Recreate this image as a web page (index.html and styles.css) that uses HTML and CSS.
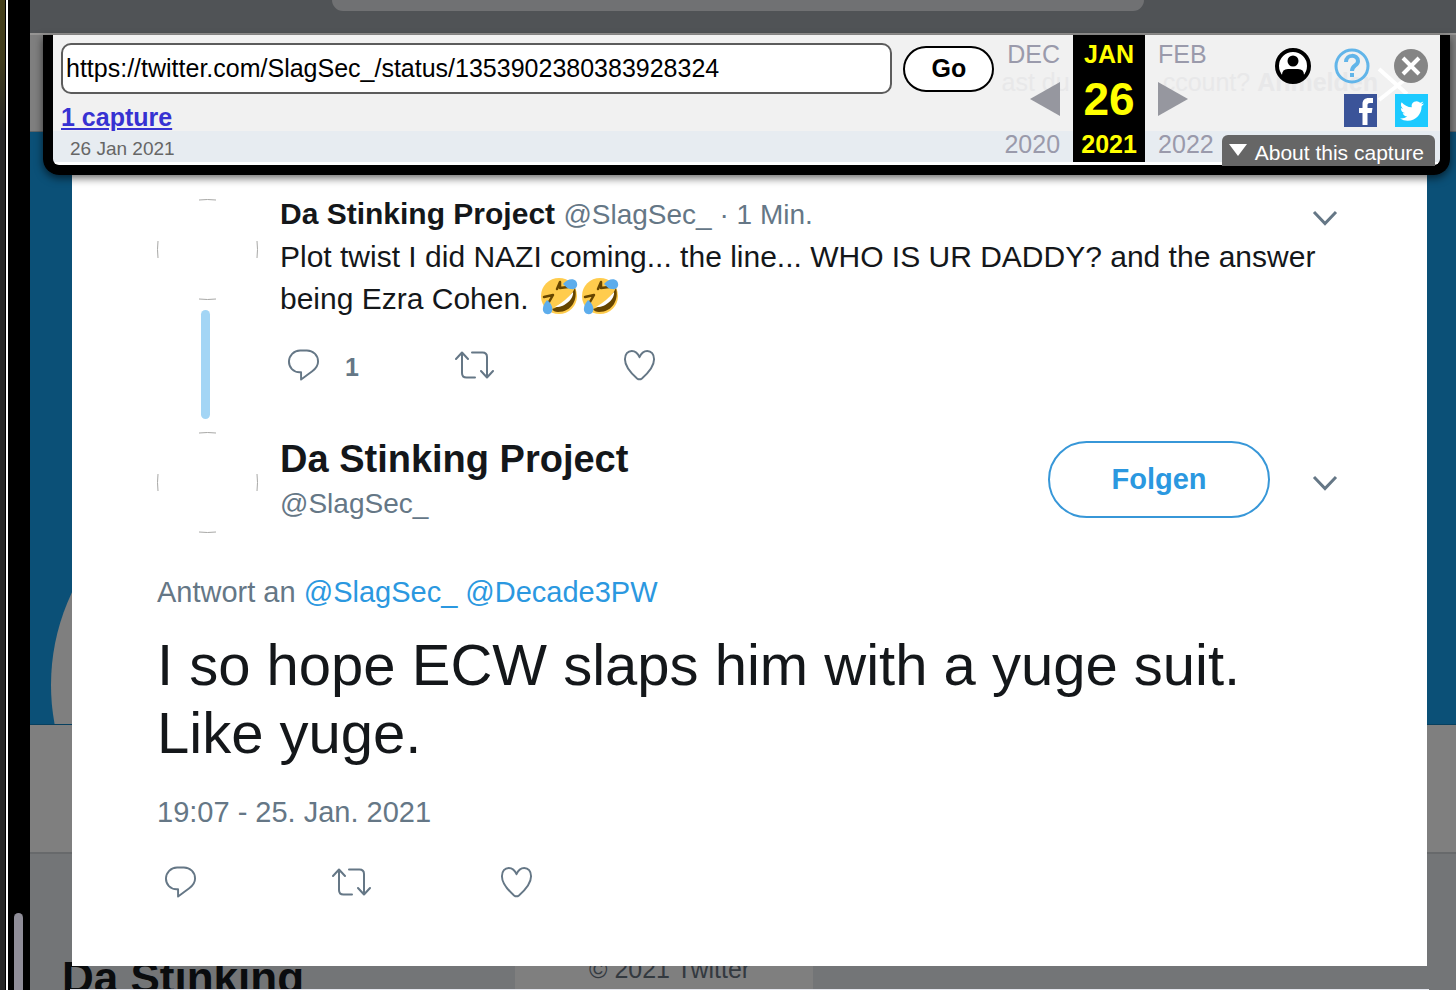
FILE: index.html
```html
<!DOCTYPE html>
<html lang="de">
<head>
    <meta charset="UTF-8">
    <meta name="viewport" content="width=device-width, initial-scale=1.0">
    <title>Da Stinking Project auf Twitter</title>
    <link rel="stylesheet" href="styles.css">
</head>
<body>
    <svg class="defs" aria-hidden="true">
        <symbol id="reply" viewBox="0 0 34 34">
            <path d="M13.500 2h7C27 2 32 7 32 13.500c0 4-2.500 7.500-6 10L14.500 32v-7.500H13C6.500 24.500 2 19.500 2 13.500S7 2 13.500 2z"/>
        </symbol>
        <symbol id="retweet" viewBox="0 0 40 34">
            <path d="M1 11l6-6.500 6 6.500M7 5v20q0 4.500 4.500 4.500H20M17 4.500h10.500Q32 4.500 32 9v20M26 23l6 6.500 6-6.500"/>
        </symbol>
        <symbol id="heart" viewBox="0 0 34 34">
            <path d="M17 9C15 4 12 2.500 9 2.500 5 2.500 2 6 2 11c0 8 7 15 12.500 19.800q2.500 2 5 0C25 26 32 19 32 11c0-5-3-8.500-7-8.500-3 0-6 1.500-8 6.500z"/>
        </symbol>
        <symbol id="down" viewBox="0 0 26 16">
            <path d="M2 2l11 11.500L24 2"/>
        </symbol>
        <symbol id="avatar" viewBox="0 0 101 101">
            <path d="M42 1Q50.500 0 59 1M42 100Q50.500 101 59 100M1 42Q0 50.500 1 59M100 42Q101 50.500 100 59"/>
        </symbol>
        <symbol id="rofl" viewBox="0 0 38 38">
            <circle cx="19" cy="19" r="18" fill="#ffcc4d"/>
            <path d="M35 11c3 11-3 24-17 24-3 0-5-1-6-3 8-2 18-11 23-21z" fill="#664500"/>
            <path d="M33 15c1 7-9 16-18 15 7-4 13-9 18-15z" fill="#fff"/>
            <path d="M4 20l9-2-4 7M17 12l3-7v6l8-1" fill="none" stroke="#664500" stroke-width="2.500" stroke-linecap="round" stroke-linejoin="round"/>
            <path d="M23 7c4-5 10-6 13-3 3 4 0 9-5 8-3 0-5-2-8-5zM7 23c5 4 7 9 4 13-4 3-9 0-8-5 0-3 2-5 4-8z" fill="#5dadec"/>
        </symbol>
    </svg>

    <div class="edge"><span class="scrollbar"></span></div>

    <div class="page">
        <!-- profile page behind the dialog -->
        <div class="backdrop">
            <div class="browser-bar"><span class="browser-tab"></span></div>
            <div class="top-nav"></div>
            <div class="banner"><span class="banner-avatar"></span></div>
            <div class="stats"></div>
            <div class="profile">
                <h2>Da Stinking</h2>
                <div class="copyright">© 2021 Twitter</div>
            </div>
        </div>

        <div class="front">
            <div class="toolbar">
                <div class="ghost" aria-hidden="true"><span>ast du</span><span>ccount? <b>Anmelden</b></span></div>
                <svg class="ghost-x" viewBox="0 0 36 36" aria-hidden="true"><path d="M3 3l28 25M31 12L3 34"/></svg>
                <div class="search">
                    <form class="search-row">
                        <input type="text" aria-label="URL" value="https://twitter.com/SlagSec_/status/1353902380383928324">
                        <button type="button">Go</button>
                    </form>
                    <a class="captures" href="#">1 capture</a>
                    <div class="range">26 Jan 2021</div>
                </div>
                <div class="calendar">
                    <div class="month prev">
                        <span>DEC</span>
                        <svg viewBox="0 0 30 34"><path d="M30 0v34L0 17z"/></svg>
                        <span>2020</span>
                    </div>
                    <div class="month current">
                        <span>JAN</span>
                        <span class="day">26</span>
                        <span>2021</span>
                    </div>
                    <div class="month next">
                        <span>FEB</span>
                        <svg viewBox="0 0 30 34"><path d="M0 0v34l30-17z"/></svg>
                        <span>2022</span>
                    </div>
                </div>
                <div class="tools">
                    <div class="tool-row">
                        <button type="button" aria-label="Account"><svg viewBox="0 0 36 36"><circle cx="18" cy="18" r="16" fill="#fff" stroke="#000" stroke-width="4"/><circle cx="18" cy="13" r="5.500"/><path d="M7 31v-4q0-6 6-6h10q6 0 6 6v4q-11 8-22 0z"/></svg></button>
                        <button type="button" aria-label="Help"><svg viewBox="0 0 36 36"><g fill="none" stroke="#62b5e9"><circle cx="18" cy="18" r="16" stroke-width="3"/><path d="M12 14c0-8 12-8 12-1 0 5-6 4-6 10" stroke-width="4"/><path d="M18 25v4" stroke-width="4"/></g></svg></button>
                        <button type="button" aria-label="Close"><svg viewBox="0 0 36 36"><circle cx="18" cy="18" r="17" fill="#858585"/><path d="M10 10l16 16M26 10L10 26" stroke="#fff" stroke-width="4"/></svg></button>
                    </div>
                    <div class="tool-row share">
                        <a href="#" aria-label="Facebook"><svg viewBox="0 0 33 33"><path d="M0 0h33v33H0z" fill="#3b5499"/><path d="M18.500 31V19H15v-5h3.500v-4c0-4 2.500-6 6-6H29v5h-3c-1.800 0-2.500.700-2.500 2v3h5l-.800 5h-4.200v12z" fill="#fff"/></svg></a>
                        <a href="#" aria-label="Twitter"><svg viewBox="0 0 33 33"><path d="M0 0h33v33H0z" fill="#1dcaff"/><path transform="translate(5 5)" fill="#fff" d="M23.953 4.570a10 10 0 01-2.825.775 4.958 4.958 0 002.163-2.723c-.951.555-2.005.959-3.127 1.184a4.920 4.920 0 00-8.384 4.482C7.690 8.095 4.067 6.130 1.640 3.162a4.822 4.822 0 00-.666 2.475c0 1.710.870 3.213 2.188 4.096a4.904 4.904 0 01-2.228-.616v.060a4.923 4.923 0 003.946 4.827 4.996 4.996 0 01-2.212.085 4.936 4.936 0 004.604 3.417 9.867 9.867 0 01-6.102 2.105c-.390 0-.779-.023-1.170-.067a13.995 13.995 0 007.557 2.209c9.053 0 13.998-7.496 13.998-13.985 0-.210 0-.420-.015-.630A9.935 9.935 0 0024 4.590z"/></svg></a>
                    </div>
                    <button type="button" class="about"><svg viewBox="0 0 18 12"><path d="M0 0h18l-9 12z"/></svg>About this capture</button>
                </div>
            </div>

            <main class="card">
                <article class="tweet">
                    <div class="thread">
                        <svg class="avatar"><use href="#avatar"/></svg>
                        <span class="thread-line"></span>
                    </div>
                    <div class="tweet-body">
                        <div class="tweet-head">
                            <div><b>Da Stinking Project</b> <span class="muted handle">@SlagSec_ · 1 Min.</span></div>
                            <button type="button" class="more" aria-label="Mehr"><svg><use href="#down"/></svg></button>
                        </div>
                        <p>Plot twist I did NAZI coming... the line... WHO IS UR DADDY? and the answer being Ezra Cohen. <svg class="emoji"><use href="#rofl"/></svg><svg class="emoji"><use href="#rofl"/></svg></p>
                        <div class="actions">
                            <button type="button" aria-label="Antworten"><svg><use href="#reply"/></svg><span>1</span></button>
                            <button type="button" aria-label="Retweeten"><svg class="wide"><use href="#retweet"/></svg></button>
                            <button type="button" aria-label="Gefällt mir"><svg><use href="#heart"/></svg></button>
                        </div>
                    </div>
                </article>

                <article class="main-tweet">
                    <header class="author">
                        <svg class="avatar"><use href="#avatar"/></svg>
                        <div class="author-name">
                            <h1>Da Stinking Project</h1>
                            <span class="muted handle">@SlagSec_</span>
                        </div>
                        <button type="button" class="follow">Folgen</button>
                        <button type="button" class="more" aria-label="Mehr"><svg><use href="#down"/></svg></button>
                    </header>
                    <div class="reply-to">Antwort an <a href="#">@SlagSec_</a> <a href="#">@Decade3PW</a></div>
                    <p class="big-text">I so hope ECW slaps him with a yuge suit. Like yuge.</p>
                    <div class="date">19:07 - 25. Jan. 2021</div>
                    <div class="actions">
                        <button type="button" aria-label="Antworten"><svg><use href="#reply"/></svg></button>
                        <button type="button" aria-label="Retweeten"><svg class="wide"><use href="#retweet"/></svg></button>
                        <button type="button" aria-label="Gefällt mir"><svg><use href="#heart"/></svg></button>
                    </div>
                </article>
            </main>
            <div class="next-card"></div>
        </div>
    </div>
</body>
</html>
```
FILE: styles.css
```css
* {
    box-sizing: border-box;
}
body {
    font-family: "Liberation Sans", Arial, Helvetica, sans-serif;
    font-size: 29px;
    color: #14171a;
    margin: 0;
    display: flex;
    height: 100vh;
    overflow: hidden;
    background: #000;
}
button {
    font-family: inherit;
    background: none;
    border: none;
    padding: 0;
    cursor: pointer;
}
a {
    color: #2b98e0;
    text-decoration: none;
}
h1, h2, p {
    margin: 0;
}
svg {
    display: block;
}
.defs {
    position: absolute;
    width: 0;
    height: 0;
}

/* left edge of the window */
.edge {
    width: 30px;
    flex: none;
    display: flex;
    flex-direction: column;
    justify-content: flex-end;
    padding-left: 14px;
    background: linear-gradient(90deg, transparent 5px, #000 5px, #000 6px, #fff 6px, #fff 8px, #000 8px), linear-gradient(#45401a, #403c1c 60px, #262626 130px);
}
.scrollbar {
    width: 9px;
    height: 77px;
    background: #8f8d98;
    border-radius: 5px 5px 0 0;
}
.page {
    flex: 1;
    min-width: 0;
    position: relative;
    overflow: hidden;
}

/* dimmed page */
.backdrop {
    position: absolute;
    inset: 0;
    display: flex;
    flex-direction: column;
    background: #737577;
}
.browser-bar {
    height: 35px;
    flex: none;
    background: #505356;
    border-bottom: 2px solid #969594;
    display: flex;
    justify-content: center;
}
.browser-tab {
    width: 57%;
    height: 11px;
    margin-right: 10px;
    background: #707173;
    border-radius: 0 0 20px 20px;
}
.top-nav {
    height: 97px;
    flex: none;
    background: #7f7f7f;
    border-bottom: 1px solid #5e6468;
}
.banner {
    height: 593px;
    flex: none;
    background: #0b5077;
    border-bottom: 1px solid #07405f;
    display: flex;
    align-items: flex-end;
    overflow: hidden;
}
.banner-avatar {
    width: 430px;
    height: 430px;
    flex: none;
    margin: 0 0 -176px 21px;
    border-radius: 50%;
    background: #7f7f7f;
}
.stats {
    height: 129px;
    flex: none;
    background: #7f7f7f;
    border-bottom: 2px solid #67696b;
}
.profile {
    flex: 1;
    display: flex;
    padding: 99px 0 0 32px;
    gap: 211px;
}
.profile h2 {
    font-size: 44px;
    line-height: 50px;
    color: #0a0c0e;
    white-space: nowrap;
}
.copyright {
    width: 298px;
    padding: 2px 0 0 74px;
    background: #7f7f7f;
    color: #33393f;
    font-size: 25px;
    line-height: 28px;
    white-space: nowrap;
}

/* front content */
.front {
    position: relative;
    padding-top: 35px;
}

/* archive toolbar */
.toolbar {
    position: relative;
    z-index: 1;
    display: flex;
    margin: 0 6px 0 13px;
    border: solid #000;
    border-width: 0 10px 10px;
    border-radius: 0 0 16px 16px;
    background: linear-gradient(#f1f1f1 96px, #e7ecf1 96px, #e7ecf1 127px, #fff 127px);
    box-shadow: 0 3px 8px rgba(0, 0, 0, 0.6);
}
.search {
    flex: 1;
    min-width: 0;
    padding: 8px 0 0 8px;
}
.search-row {
    display: flex;
    align-items: center;
    gap: 11px;
}
.search input {
    flex: 1;
    min-width: 0;
    height: 51px;
    padding: 0 3px;
    border: 2px solid #5c5c5c;
    border-radius: 10px;
    background: #fff;
    font-family: inherit;
    font-size: 25px;
    color: #000;
}
.search button {
    width: 91px;
    height: 46px;
    border: 2px solid #000;
    border-radius: 23px;
    background: #fff;
    font-size: 25px;
    font-weight: bold;
    color: #000;
}
.captures {
    display: block;
    width: max-content;
    margin-top: 7px;
    font-size: 25px;
    line-height: 32px;
    font-weight: bold;
    color: #3732d2;
    text-decoration: underline;
}
.range {
    padding-left: 9px;
    font-size: 19px;
    line-height: 32px;
    color: #666;
}
.calendar {
    position: relative;
    display: flex;
    margin-left: 10px;
    font-size: 25px;
    line-height: 28px;
    color: #9a9aab;
}
.month {
    display: flex;
    flex-direction: column;
    justify-content: space-between;
    height: 127px;
    padding: 5px 0 4px;
}
.month svg {
    width: 30px;
    height: 34px;
    fill: #96979f;
}
.prev {
    align-items: flex-end;
    margin-right: 13px;
}
.current {
    width: 72px;
    align-items: center;
    background: #000;
    color: #ff0;
    font-weight: bold;
}
.current .day {
    font-size: 46px;
    line-height: 46px;
}
.next {
    margin-left: 13px;
}
.tools {
    position: relative;
    display: flex;
    flex-direction: column;
    align-items: flex-end;
    margin-left: 8px;
    padding: 13px 5px 0 0;
}
.tool-row {
    display: flex;
    gap: 23px;
    padding-right: 6px;
}
.tool-row svg {
    width: 36px;
    height: 36px;
}
.share {
    gap: 18px;
    padding: 10px 7px 8px 0;
}
.share svg {
    width: 33px;
    height: 33px;
}
.about {
    display: flex;
    align-items: center;
    gap: 8px;
    height: 31px;
    margin-bottom: -2px;
    padding: 4px 11px 0 7px;
    border-radius: 6px 6px 0 0;
    background: #666;
    color: #fff;
    font-size: 21px;
    white-space: nowrap;
}
.about svg {
    width: 18px;
    height: 12px;
    margin-bottom: 6px;
    fill: #fff;
}
.ghost {
    position: absolute;
    top: 32px;
    right: 62px;
    display: flex;
    gap: 93px;
    font-size: 25px;
    line-height: 30px;
    color: #e8e8e9;
    white-space: nowrap;
}
.ghost-x {
    position: absolute;
    top: 31px;
    right: 28px;
    width: 36px;
    height: 36px;
    fill: none;
    stroke: #fff;
    stroke-width: 4px;
}

/* tweet dialog */
.card {
    margin: 0 29px 0 42px;
    padding: 18px 85px 67px;
    background: #fff;
}
.muted {
    color: #657786;
}
.handle {
    font-size: 28px;
}
.tweet {
    display: grid;
    grid-template-columns: 101px 1fr;
    gap: 22px;
}
.thread {
    display: flex;
    flex-direction: column;
    align-items: center;
    padding: 6px 4px 13px 0;
}
.avatar {
    width: 101px;
    height: 101px;
    flex: none;
    fill: none;
    stroke: #a8a8a6;
    stroke-width: 1px;
}
.thread .avatar {
    margin-right: -4px;
}
.thread-line {
    width: 9px;
    height: 109px;
    margin-top: 10px;
    border-radius: 5px;
    background: #a3d5f5;
}
.tweet-body {
    font-size: 30px;
    line-height: 42px;
}
.tweet-head {
    display: flex;
    justify-content: space-between;
    align-items: center;
}
.more {
    padding: 6px 4px 0 0;
}
.more svg {
    width: 26px;
    height: 16px;
    fill: none;
    stroke: #657786;
    stroke-width: 3px;
}
.emoji {
    display: inline-block;
    width: 38px;
    height: 38px;
    margin: -8px 0 0 3px;
    vertical-align: -6px;
}
.actions {
    display: flex;
    margin-top: 28px;
    padding-left: 7px;
}
.actions button {
    display: flex;
    align-items: center;
    gap: 25px;
    width: 168px;
    height: 34px;
    color: #657786;
    font-size: 25px;
    font-weight: bold;
}
.actions svg {
    width: 33px;
    height: 34px;
    fill: none;
    stroke: #657786;
    stroke-width: 2px;
    stroke-linecap: round;
    stroke-linejoin: round;
}
.actions .wide {
    width: 40px;
}
.actions span {
    padding-top: 5px;
}
.author {
    display: flex;
    align-items: center;
}
.author-name {
    flex: 1;
    margin-left: 22px;
    padding-bottom: 4px;
    line-height: 42px;
}
.author-name h1 {
    font-size: 38px;
    line-height: 46px;
}
.follow {
    width: 222px;
    height: 77px;
    margin: 0 42px 6px 0;
    border: 2px solid #3797d8;
    border-radius: 39px;
    color: #2b98e0;
    font-size: 29px;
    font-weight: bold;
}
.author .more {
    padding-top: 0;
}
.reply-to {
    margin-top: 39px;
    line-height: 40px;
    color: #657786;
}
.big-text {
    margin-top: 19px;
    font-size: 58px;
    line-height: 68px;
}
.date {
    margin-top: 25px;
    line-height: 40px;
    color: #657786;
}
.main-tweet .actions {
    margin-top: 33px;
}
.next-card {
    height: 60px;
    margin: 23px 27px 0 40px;
    background: #e6e8ef;
}
```
